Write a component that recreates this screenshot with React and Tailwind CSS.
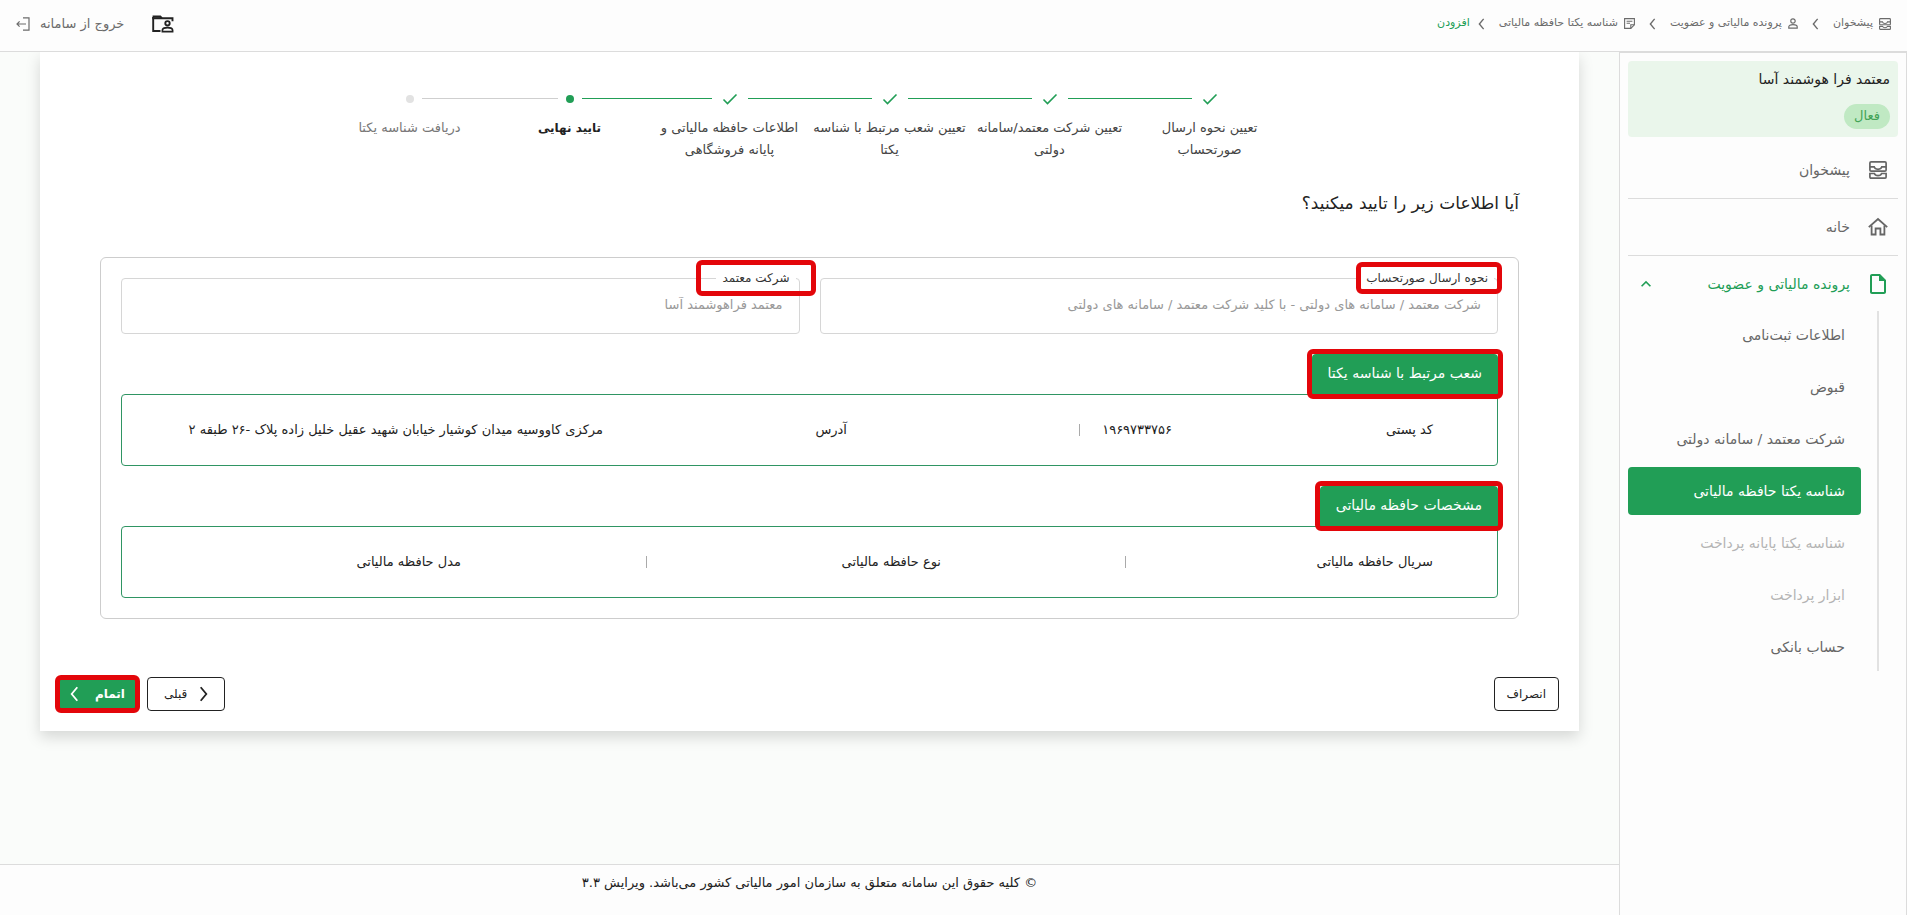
import { MdOutlineInsertDriveFile, MdKeyboardArrowUp } from 'react-icons/md'

const steps = [
  { label: 'تعیین نحوه ارسال صورتحساب', state: 'done' },
  { label: 'تعیین شرکت معتمد/سامانه دولتی', state: 'done' },
  { label: 'تعیین شعب مرتبط با شناسه یکتا', state: 'done' },
  { label: 'اطلاعات حافظه مالیاتی و پایانه فروشگاهی', state: 'done' },
  { label: 'تایید نهایی', state: 'active' },
  { label: 'دریافت شناسه یکتا', state: 'todo' },
]

const stepText = {
  done: 'text-[13px]',
  active: 'text-xs leading-[22px] font-bold text-[#222]',
  todo: 'text-[13px] text-[#777]',
}

const stepLine = {
  done: 'start-[98px] w-[124px] border-[#219e56]',
  active: 'start-[98px] w-[130px] border-[#219e56]',
  todo: 'start-[92px] w-[136px] border-[#cfcfcf]',
}

const subItems = [
  { label: 'اطلاعات ثبت‌نامی' },
  { label: 'قبوض' },
  { label: 'شرکت معتمد / سامانه دولتی' },
  { label: 'شناسه یکتا حافظه مالیاتی', active: true },
  { label: 'شناسه یکتا پایانه پرداخت', disabled: true },
  { label: 'ابزار پرداخت', disabled: true },
  { label: 'حساب بانکی' },
]

function Highlight({ className }) {
  return <span aria-hidden="true" className={`pointer-events-none absolute rounded-md border-5 border-[#e3060a] ${className}`} />
}

function Chevron({ className, flip }) {
  return (
    <svg viewBox="0 0 8 14" className={className} fill="none" stroke="currentColor" strokeWidth="1.6" aria-hidden="true">
      <path d={flip ? 'M1.5 1l5 6-5 6' : 'M6.5 1l-5 6 5 6'} />
    </svg>
  )
}

function InboxIcon({ className }) {
  return (
    <svg viewBox="0 0 18 18" className={className} fill="none" stroke="currentColor" strokeWidth="1.7" aria-hidden="true">
      <rect x=".9" y=".9" width="16.200" height="9.300" rx="1.200" />
      <path d="M.9 5.900h4.300c.4 1.500 1.900 2.400 3.800 2.400s3.400-.9 3.800-2.400h4.300" />
      <path d="M.9 12.500h4.500c.5 1.300 1.800 2.100 3.600 2.100s3.100-.8 3.600-2.100h4.500v3.600a1 1 0 0 1-1 1H1.900a1 1 0 0 1-1-1z" />
    </svg>
  )
}

function HomeIcon() {
  return (
    <svg viewBox="0 0 20 20" className="size-5" fill="none" stroke="currentColor" strokeWidth="1.8" aria-hidden="true">
      <path d="M.8 10.200L10 2l9.200 8.200" />
      <path d="M3.600 8.500v9h4v-6h4.800v6h4v-9" />
    </svg>
  )
}

function UserIcon() {
  return (
    <svg viewBox="0 0 10 11" className="h-[11px] w-[10px]" fill="none" stroke="currentColor" strokeWidth="1.2" aria-hidden="true">
      <circle cx="5" cy="3" r="2.200" />
      <path d="M.8 10.200V8.800c0-1.400 1.600-2.200 4.200-2.200s4.200.8 4.200 2.200v1.400z" />
    </svg>
  )
}

function NoteIcon() {
  return (
    <svg viewBox="0 0 11 11" className="size-[11px]" fill="none" stroke="currentColor" strokeWidth="1.100" aria-hidden="true">
      <path d="M.6.6h9.800v6.200l-3.600 3.600H.6z" />
      <path d="M6.800 10.400V6.800h3.600M2.600 3.200h5.800M2.600 5.200h3.400" />
    </svg>
  )
}

function FolderUserIcon() {
  return (
    <svg viewBox="0 0 22 18" className="h-[18px] w-[22px]" fill="none" stroke="currentColor" strokeWidth="1.900" aria-hidden="true">
      <path d="M8.500 16H1.200V2" />
      <path d="M.3 3.200h20.200v3" />
      <path d="M.6 1.600h7.600l1.600 1.600" strokeWidth="2.200" />
      <circle cx="15.500" cy="8.300" r="2.200" />
      <path d="M10.400 16.600v-1.400c0-1.500 2-2.500 5.100-2.500s5.100 1 5.100 2.500v1.400z" strokeWidth="1.700" />
    </svg>
  )
}

function ExitIcon() {
  return (
    <svg viewBox="0 0 14 14" className="size-[14px]" fill="none" stroke="currentColor" strokeWidth="1.200" aria-hidden="true">
      <path d="M7 .8h6v12.400H7" />
      <path d="M10 7H1M3.600 4.400L1 7l2.600 2.600" />
    </svg>
  )
}

function Header() {
  return (
    <header className="flex h-[52px] items-center justify-between border-b border-[#dcdcdc] bg-[#fdfdfd] px-4 pb-1 text-[#6b6b6b]">
      <nav className="flex items-center gap-2 text-[11px]">
        <a href="#dashboard" className="flex items-center gap-1.5"><InboxIcon className="size-3" />پیشخوان</a>
        <Chevron className="mx-1.5 h-[12px] w-[7px]" />
        <a href="#tax-file" className="flex items-center gap-1.5"><UserIcon />پرونده مالیاتی و عضویت</a>
        <Chevron className="mx-1.5 h-[12px] w-[7px]" />
        <a href="#memory-id" className="flex items-center gap-1.5"><NoteIcon />شناسه یکتا حافظه مالیاتی</a>
        <Chevron className="ms-1.5 h-[12px] w-[7px]" />
        <a href="#add" className="text-[#219e56]">افزودن</a>
      </nav>
      <div className="flex items-center gap-7">
        <button type="button" aria-label="پرونده‌ها" className="text-[#222]"><FolderUserIcon /></button>
        <button type="button" className="flex items-center gap-2.5 text-[13px]">خروج از سامانه<ExitIcon /></button>
      </div>
    </header>
  )
}

function NavIcon({ children }) {
  return <span className="flex w-6 shrink-0 justify-center">{children}</span>
}

function Sidebar() {
  return (
    <aside className="w-[288px] shrink-0 border-x border-t border-[#dcdcdc] bg-[#fdfdfd] px-2 pt-2 text-sm text-[#666]">
      <div className="flex h-[76px] flex-col items-start justify-between rounded bg-[#eaf6eb] p-2">
        <strong className="leading-5 font-normal text-[#222]">معتمد فرا هوشمند آسا</strong>
        <span className="h-[25px] rounded-full bg-[#c0e9c3] px-2.5 text-[13px] leading-6 text-[#43a356]">فعال</span>
      </div>
      <nav>
        <a href="#dashboard" className="mt-1 flex h-[58px] items-center gap-4 border-b border-[#dcdcdc] px-2">
          <NavIcon><InboxIcon className="size-[18px]" /></NavIcon>پیشخوان
        </a>
        <a href="#home" className="flex h-[57px] items-center gap-4 border-b border-[#dcdcdc] px-2">
          <NavIcon><HomeIcon /></NavIcon>خانه
        </a>
        <button type="button" className="flex h-[55px] w-full items-center gap-4 px-2 text-[#219e56]">
          <NavIcon><MdOutlineInsertDriveFile size={24} /></NavIcon>
          پرونده مالیاتی و عضویت
          <MdKeyboardArrowUp size={20} className="ms-auto" />
        </button>
        <ul className="ms-[19px] flex flex-col gap-1 border-s-2 border-[#e2e2e2] ps-4">
          {subItems.map((item) => (
            <li key={item.label}>
              <a
                href="#sub"
                className={`flex h-12 items-center rounded px-4 ${item.active ? 'bg-[#219e56] text-white' : item.disabled ? 'text-[#b4b4b4]' : ''}`}
              >
                {item.label}
              </a>
            </li>
          ))}
        </ul>
      </nav>
    </aside>
  )
}

function StepMark({ state }) {
  if (state === 'done') {
    return (
      <svg viewBox="0 0 16 12" className="h-3 w-4 text-[#219e56]" fill="none" stroke="currentColor" strokeWidth="1.600" aria-hidden="true">
        <path d="M1.500 6.500l4 4L14.500 1.500" />
      </svg>
    )
  }
  return <span className={`size-2 rounded-full ${state === 'active' ? 'bg-[#219e56]' : 'bg-[#e2e2e2]'}`} />
}

function Stepper() {
  return (
    <ol className="mx-auto flex w-[960px] max-w-full text-center leading-[22px] text-[#444]">
      {steps.map((step, i) => (
        <li key={step.label} className="relative flex w-40 flex-col items-center gap-3">
          <span className="flex h-3 items-center"><StepMark state={step.state} /></span>
          {i < steps.length - 1 && <span className={`absolute top-[5px] border-t ${stepLine[steps[i + 1].state]}`} />}
          <span className={stepText[step.state]}>{step.label}</span>
        </li>
      ))}
    </ol>
  )
}

function Field({ id, label, value, highlight }) {
  return (
    <div className="relative flex-1">
      <label htmlFor={id} className="absolute start-1 -top-2.5 bg-white px-1.5 text-xs leading-5 text-[#333]">
        {label}
        <Highlight className={highlight} />
      </label>
      <input
        id={id}
        readOnly
        value={value}
        className="h-14 w-full rounded border border-[#d6d6d6] px-4 pb-1 text-[13px] text-[#999] outline-none"
      />
    </div>
  )
}

function Panel({ title, columns, children }) {
  return (
    <section className="mt-5">
      <h2 className="relative h-10 w-fit rounded-t bg-[#219e56] px-4 text-sm leading-[38px] text-white">
        {title}
        <Highlight className="-inset-[5px]" />
      </h2>
      <dl className={`grid h-[72px] items-center rounded-sm border border-[#2f9563] ps-16 text-[13px] text-[#222] ${columns}`}>
        {children}
      </dl>
    </section>
  )
}

function Divider() {
  return <dd className="h-3 border-s border-[#aaa]" />
}

export default function App() {
  return (
    <div dir="rtl" className="flex min-h-screen flex-col bg-[#fafcfa] font-['DejaVu_Sans',sans-serif]">
      <Header />
      <div className="flex grow">
        <Sidebar />
        <div className="flex min-w-0 grow flex-col">
          <main className="grow overflow-hidden px-10">
            <div className="bg-white px-5 pt-[41px] pb-5 shadow-[0_6px_14px_rgba(0,0,0,0.15)]">
              <Stepper />
              <div className="px-10">
                <h1 className="mt-7 text-[17px] leading-7 text-[#222]">آیا اطلاعات زیر را تایید میکنید؟</h1>
                <div className="mt-10 rounded-md border border-[#cdcdcd] p-5">
                  <div className="flex gap-5">
                    <Field
                      id="method"
                      label="نحوه ارسال صورتحساب"
                      value="شرکت معتمد / سامانه های دولتی - با کلید شرکت معتمد / سامانه های دولتی"
                      highlight="-start-2 -end-1 -inset-y-1.5"
                    />
                    <Field id="company" label="شرکت معتمد" value="معتمد فراهوشمند آسا" highlight="-inset-x-5 -inset-y-2" />
                  </div>
                  <Panel title="شعب مرتبط با شناسه یکتا" columns="grid-cols-[261fr_92fr_233fr_244fr_481fr]">
                    <dt>کد پستی</dt>
                    <dd>۱۹۶۹۷۳۳۷۵۶</dd>
                    <Divider />
                    <dt>آدرس</dt>
                    <dd className="whitespace-nowrap">مرکزی کاووسیه میدان کوشیار خیابان شهید عقیل خلیل زاده پلاک -۲۶ طبقه ۲</dd>
                  </Panel>
                  <Panel title="مشخصات حافظه مالیاتی" columns="grid-cols-[307fr_185fr_294fr_186fr_339fr]">
                    <dt>سریال حافظه مالیاتی</dt>
                    <Divider />
                    <dt>نوع حافظه مالیاتی</dt>
                    <Divider />
                    <dt>مدل حافظه مالیاتی</dt>
                  </Panel>
                </div>
              </div>
              <div className="mt-[58px] flex items-center gap-3 text-xs text-[#222]">
                <button type="button" className="me-auto h-[34px] rounded border border-[#222] px-3">انصراف</button>
                <button type="button" className="flex h-[34px] items-center gap-3 rounded border border-[#222] px-4">
                  <Chevron flip className="h-4 w-[9px]" />قبلی
                </button>
                <button type="button" className="relative flex h-7 items-center gap-4 bg-[#219e56] px-2.5 font-bold text-white">
                  اتمام<Chevron className="h-4 w-[9px]" />
                  <Highlight className="-inset-[5px]" />
                </button>
              </div>
            </div>
          </main>
          <footer className="h-[51px] border-t border-[#dcdcdc] bg-[#fdfdfd] pt-2 text-center text-[13px] leading-5 text-[#222]">
            © کلیه حقوق این سامانه متعلق به سازمان امور مالیاتی کشور می‌باشد. ویرایش ۳.۳
          </footer>
        </div>
      </div>
    </div>
  )
}
